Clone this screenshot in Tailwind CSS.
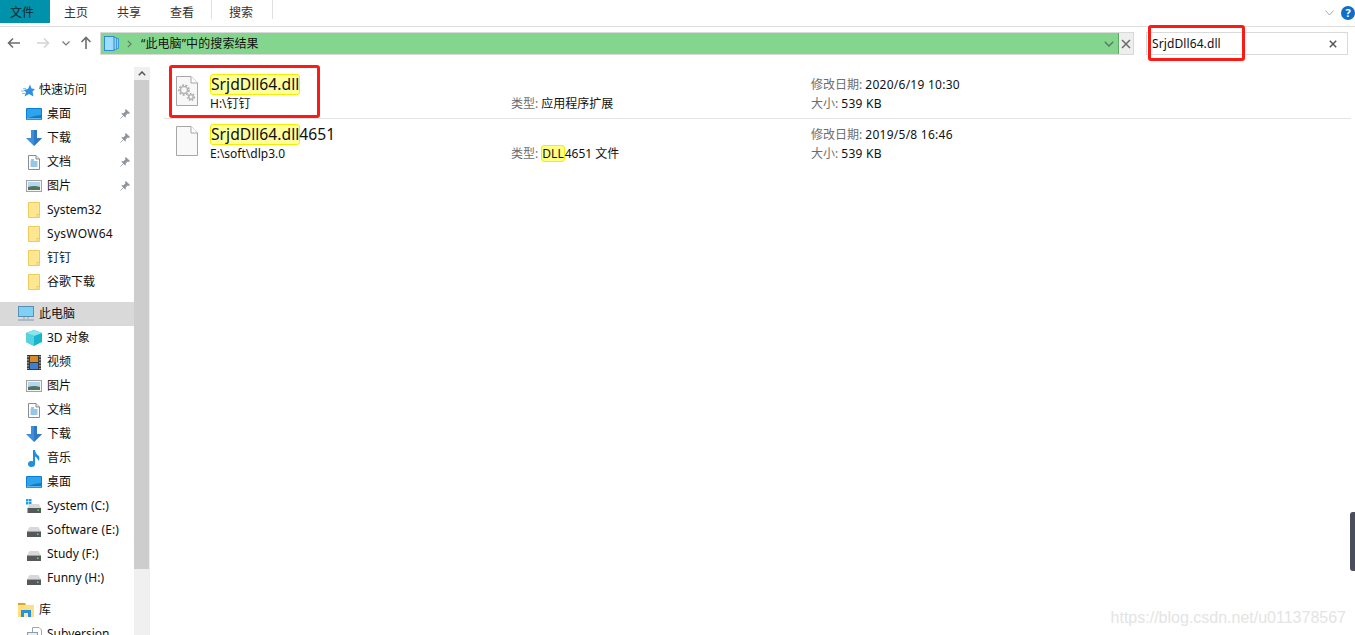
<!DOCTYPE html>
<html lang="zh-CN">
<head>
    <meta charset="UTF-8">
    <title>SrjdDll64.dll - 搜索结果</title>
    <script src="https://cdn.jsdelivr.net/npm/@tailwindcss/browser@4"></script>
</head>
<body class="bg-white overflow-hidden">
    <svg class="hidden">
        <symbol id="desktop" viewBox="0 0 16 12"><rect x="0" y="0" width="16" height="12" rx="1" fill="#0a7fd0"/><path d="M1 10.5 L1 1 H15 V7 Q8 7 1 10.5Z" fill="#2ea4ee"/><rect x="1" y="10.5" width="14" height="0.7" fill="#bfe3fa"/></symbol>
        <symbol id="down" viewBox="0 0 16 16"><path d="M5 0 H11 V8 H16 L8 16 L0 8 H5Z" fill="#3d8fdc"/><path d="M8 0 H11 V8 H16 L8 16Z" fill="#2f78c4"/></symbol>
        <symbol id="doc" viewBox="0 0 12 15"><path d="M.5.5 H8 L11.5 4 V14.5 H.5Z" fill="#fff" stroke="#8c8c8c"/><path d="M8 .5 V4 H11.5" fill="#e6e6e6" stroke="#8c8c8c"/><path d="M3 5 H6 M2.5 7 H9.5 M2.5 9 H9.5 M2.5 11 H9.5" stroke="#2b8fd6"/></symbol>
        <symbol id="pic" viewBox="0 0 16 12"><rect x=".5" y=".5" width="15" height="11" fill="#f4f4f4" stroke="#a3a3a3"/><rect x="2" y="2" width="12" height="8" fill="#b6d6ee"/><path d="M2 7 Q8 5 14 7 V10 H2Z" fill="#52735c"/></symbol>
        <symbol id="folder" viewBox="0 0 12 16"><path d="M.5.5 H11.5 V15.5 H.5Z" fill="#ffe792" stroke="#efcb5a"/><path d="M9 15.5 V12.5 H11.5" fill="none" stroke="#efcb5a"/></symbol>
        <symbol id="pin" viewBox="0 0 11 11"><path d="M6.5 .5 L10.5 4.5 L9.5 5 L8 4.8 L6 7 L5.8 9 L2 5.2 L4 5 L6.2 3 L6 1.500Z M3.500 7.500 L.5 10.500" fill="#8c9299" stroke="#8c9299" stroke-width=".8"/></symbol>
        <symbol id="drive" viewBox="0 0 14 10"><path d="M2.500 0 H11.500 L14 4.500 H0Z" fill="#d8d8d8"/><rect x="0" y="4.500" width="14" height="5.500" fill="#55585c"/><rect x="10" y="6.500" width="1.500" height="1.500" fill="#5be05b"/></symbol>
    </svg>

    <div class="h-[635px] w-[1355px] relative flex flex-col font-['Noto_Sans','Noto_Sans_CJK_SC',sans-serif] text-xs text-[#111]">

        <!-- ribbon tabs -->
        <div class="h-[27px] flex items-start border-b border-[#e0e0e0]">
            <div class="w-[50px] h-[23px] bg-[#0091ab] pl-[10px] pt-[5px] text-[#10252a]">文件</div>
            <div class="w-[53px] h-[23px] pl-[14px] pt-[5px] text-[#333]">主页</div>
            <div class="w-[53px] h-[23px] pl-[14px] pt-[5px] text-[#333]">共享</div>
            <div class="w-[55px] h-[23px] pl-[14px] pt-[5px] text-[#333]">查看</div>
            <div class="w-[62px] h-[19px] pl-[17px] pt-[5px] text-[#333] border-x border-[#e0e0e0]">搜索</div>
            <div class="ml-auto flex items-center gap-[7px] pr-0 h-[26px]">
                <svg class="w-[9px] h-[6px]" viewBox="0 0 9 6"><path d="M.5.5 L4.500 5 L8.500.5" fill="none" stroke="#a8a8a8"/></svg>
                <div class="w-[14px] h-[14px] rounded-full bg-[#0f6fc6] text-white text-[11px] font-bold flex items-center justify-center">?</div>
            </div>
        </div>

        <!-- address row -->
        <div class="h-[40px] flex items-start pt-[5px]">
            <div class="w-[100px] h-[22px] flex items-center pl-[7px]">
                <svg class="w-[14px] h-[12px]" viewBox="0 0 14 12"><path d="M13 6 H2 M6 1.500 L1.500 6 L6 10.500" fill="none" stroke="#6d6d6d" stroke-width="1.600"/></svg>
                <svg class="w-[14px] h-[12px] ml-[15px]" viewBox="0 0 14 12"><path d="M1 6 H12 M8 1.500 L12.500 6 L8 10.500" fill="none" stroke="#d4d4d4" stroke-width="1.600"/></svg>
                <svg class="w-[8px] h-[5px] ml-[12px]" viewBox="0 0 8 5"><path d="M.5.5 L4 4 L7.500.5" fill="none" stroke="#777" stroke-width="1.200"/></svg>
                <svg class="w-[12px] h-[14px] ml-[10px]" viewBox="0 0 12 14"><path d="M6 13 V2 M1.500 6 L6 1.500 L10.500 6" fill="none" stroke="#6d6d6d" stroke-width="1.600"/></svg>
            </div>
            <div class="w-[1019px] h-[23px] flex items-center bg-[#84d68f] border border-[#d9d9d9] border-r-0">
                <svg class="ml-[3px] w-[15px] h-[15px]" viewBox="0 0 15 15"><path d="M11 2.500 H14.500 V12.500 H11" fill="#8fd2f5" stroke="#3f9bd8"/><path d="M9 1.500 H12.500 V13.500 H9" fill="#8fd2f5" stroke="#3f9bd8"/><rect x=".5" y=".5" width="9.500" height="14" fill="#9fdcfb" stroke="#2f8bd0"/></svg>
                <svg class="ml-[8px] w-[5px] h-[8px]" viewBox="0 0 5 8"><path d="M.8.8 L4 4 L.8 7.200" fill="none" stroke="#5e7a62" stroke-width="1.200"/></svg>
                <span class="ml-[9px] text-[#111] tracking-[0.1px]">“此电脑”中的搜索结果</span>
                <svg class="ml-auto mr-[4px] w-[10px] h-[6px]" viewBox="0 0 10 6"><path d="M.8.8 L5 5 L9.200.8" fill="none" stroke="#5e7a62" stroke-width="1.500"/></svg>
                <div class="w-px h-full bg-[#5fa86a]"></div>
            </div>
            <div class="w-[15px] h-[23px] flex items-center justify-center bg-[#eeeeee] border border-[#d9d9d9] border-l-0">
                <svg class="w-[10px] h-[10px]" viewBox="0 0 10 10"><path d="M1 1 L9 9 M9 1 L1 9" stroke="#6d6d6d" stroke-width="1.600"/></svg>
            </div>
            <div class="ml-[12px] w-[202px] h-[23px] flex items-center border border-[#d9d9d9] pl-[5px] pr-[10px] justify-between">
                <span class="text-[#111] tracking-[0.1px]">SrjdDll64.dll</span>
                <svg class="w-[8px] h-[8px]" viewBox="0 0 8 8"><path d="M.8.8 L7.200 7.200 M7.200.8 L.8 7.200" stroke="#555" stroke-width="1.500"/></svg>
            </div>
        </div>

        <div class="flex-1 flex min-h-0">
            <!-- nav pane -->
            <nav class="w-[134px] pt-[11px] overflow-hidden">
                <div class="h-[24px] flex items-center pl-[21px]">
                    <svg class="w-[14px] h-[13px]" viewBox="0 0 14 13"><path d="M9 .5 L10.500 4.500 L14 5 L11.500 7.500 L12.500 12.500 L8 10 L3.500 12.500 L5 8 L2.500 6 L7 5Z" fill="#2f8fe0"/><path d="M0 7 H3 M1 9.500 H4 M2 4.500 H5" stroke="#8cc4f0"/></svg>
                    <span class="ml-[4px]">快速访问</span>
                </div>
                <div class="h-[24px] flex items-center pl-[26px]"><svg class="w-[16px] h-[12px]"><use href="#desktop"/></svg><span class="ml-[5px]">桌面</span><svg class="ml-auto mr-[4px] w-[10px] h-[10px]"><use href="#pin"/></svg></div>
                <div class="h-[24px] flex items-center pl-[26px]"><svg class="w-[16px] h-[16px]"><use href="#down"/></svg><span class="ml-[5px]">下载</span><svg class="ml-auto mr-[4px] w-[10px] h-[10px]"><use href="#pin"/></svg></div>
                <div class="h-[24px] flex items-center pl-[28px]"><svg class="w-[12px] h-[15px]"><use href="#doc"/></svg><span class="ml-[7px]">文档</span><svg class="ml-auto mr-[4px] w-[10px] h-[10px]"><use href="#pin"/></svg></div>
                <div class="h-[24px] flex items-center pl-[26px]"><svg class="w-[16px] h-[12px]"><use href="#pic"/></svg><span class="ml-[5px]">图片</span><svg class="ml-auto mr-[4px] w-[10px] h-[10px]"><use href="#pin"/></svg></div>
                <div class="h-[24px] flex items-center pl-[28px]"><svg class="w-[12px] h-[16px]"><use href="#folder"/></svg><span class="ml-[7px]">System32</span></div>
                <div class="h-[24px] flex items-center pl-[28px]"><svg class="w-[12px] h-[16px]"><use href="#folder"/></svg><span class="ml-[7px] tracking-[0.3px]">SysWOW64</span></div>
                <div class="h-[24px] flex items-center pl-[28px]"><svg class="w-[12px] h-[16px]"><use href="#folder"/></svg><span class="ml-[7px]">钉钉</span></div>
                <div class="h-[24px] flex items-center pl-[28px]"><svg class="w-[12px] h-[16px]"><use href="#folder"/></svg><span class="ml-[7px]">谷歌下载</span></div>
                <div class="h-[8px]"></div>
                <div class="h-[24px] flex items-center pl-[18px] bg-[#d9d9d9]">
                    <svg class="w-[16px] h-[16px]" viewBox="0 0 16 16"><rect x=".5" y=".5" width="15" height="10" fill="#7fd0f5" stroke="#5a8fb5"/><path d="M6 11 V13 M10 11 V13" stroke="#8aa6ba"/><rect x="0" y="13.500" width="16" height="1" fill="#7b9cb4"/></svg>
                    <span class="ml-[5px]">此电脑</span>
                </div>
                <div class="h-[24px] flex items-center pl-[26px]"><svg class="w-[16px] h-[16px]" viewBox="0 0 16 16"><path d="M8 0 L16 3 V12 L8 16 L0 12 V3Z" fill="#19b5cc"/><path d="M8 0 L16 3 L8 6 L0 3Z" fill="#8ae6ee"/><path d="M0 3 L8 6 V16 L0 12Z" fill="#56d2e0"/></svg><span class="ml-[5px]">3D 对象</span></div>
                <div class="h-[24px] flex items-center pl-[27px]"><svg class="w-[14px] h-[15px]" viewBox="0 0 14 15"><rect width="14" height="15" fill="#3a3a3a"/><rect x="3" y="1" width="8" height="6" fill="#d68a2e"/><rect x="3" y="8" width="8" height="6" fill="#3f7fd0"/><path d="M1 1 V14 M13 1 V14" stroke="#ddd" stroke-dasharray="1.500 1.500"/></svg><span class="ml-[6px]">视频</span></div>
                <div class="h-[24px] flex items-center pl-[26px]"><svg class="w-[16px] h-[12px]"><use href="#pic"/></svg><span class="ml-[5px]">图片</span></div>
                <div class="h-[24px] flex items-center pl-[28px]"><svg class="w-[12px] h-[15px]"><use href="#doc"/></svg><span class="ml-[7px]">文档</span></div>
                <div class="h-[24px] flex items-center pl-[26px]"><svg class="w-[16px] h-[16px]"><use href="#down"/></svg><span class="ml-[5px]">下载</span></div>
                <div class="h-[24px] flex items-center pl-[28px]"><svg class="w-[12px] h-[17px]" viewBox="0 0 12 17"><ellipse cx="3.500" cy="14" rx="3.500" ry="3" fill="#1e8fe0"/><path d="M5 14 V0 H7 Q7.500 4 11 6 Q12 9 10.500 11 Q9 7 7 6.500 V14Z" fill="#1e8fe0"/></svg><span class="ml-[7px]">音乐</span></div>
                <div class="h-[24px] flex items-center pl-[26px]"><svg class="w-[16px] h-[12px]"><use href="#desktop"/></svg><span class="ml-[5px]">桌面</span></div>
                <div class="h-[24px] flex items-center pl-[26px]"><svg class="w-[16px] h-[14px]" viewBox="0 0 16 14"><rect x="0" y="0" width="2.500" height="2.500" fill="#19a0e8"/><rect x="3" y="0" width="2.500" height="2.500" fill="#19a0e8"/><rect x="0" y="3" width="2.500" height="2.500" fill="#19a0e8"/><rect x="3" y="3" width="2.500" height="2.500" fill="#19a0e8"/><path d="M3.500 5 H13 L15 9 H1.500Z" fill="#d8d8d8"/><rect x="1.500" y="9" width="13.500" height="5" fill="#55585c"/><rect x="11.500" y="10.500" width="1.500" height="1.500" fill="#5be05b"/></svg><span class="ml-[5px]">System (C:)</span></div>
                <div class="h-[24px] flex items-center pl-[27px]"><svg class="w-[14px] h-[10px] mt-[3px]"><use href="#drive"/></svg><span class="ml-[6px] tracking-[0.15px]">Software (E:)</span></div>
                <div class="h-[24px] flex items-center pl-[27px]"><svg class="w-[14px] h-[10px] mt-[3px]"><use href="#drive"/></svg><span class="ml-[6px]">Study (F:)</span></div>
                <div class="h-[24px] flex items-center pl-[27px]"><svg class="w-[14px] h-[10px] mt-[3px]"><use href="#drive"/></svg><span class="ml-[6px]">Funny (H:)</span></div>
                <div class="h-[8px]"></div>
                <div class="h-[24px] flex items-center pl-[18px]"><svg class="w-[16px] h-[14px]" viewBox="0 0 16 14"><path d="M0 0 H7 L8 2 H16 V14 H0Z" fill="#ffdf7e"/><path d="M0 0 H7 L8 2 H0Z" fill="#d9a72f"/><rect x="3" y="7" width="10" height="7" fill="#2b8fe0"/><rect x="6" y="10" width="4" height="4" fill="#ffe9a8"/></svg><span class="ml-[5px]">库</span></div>
                <div class="h-[24px] flex items-center pl-[27px]"><svg class="w-[15px] h-[15px]" viewBox="0 0 15 15"><path d="M5.500.5 H12 L14.500 3 V14 H5.500Z" fill="#fff" stroke="#9aa8b5"/><rect x=".5" y="5.500" width="10" height="6" fill="#e8eef3" stroke="#8d9cab"/></svg><span class="ml-[5px]">Subversion</span></div>
            </nav>

            <!-- nav scrollbar -->
            <div class="w-[15px] bg-[#f0f0f0] flex flex-col items-center">
                <div class="h-[11px] flex items-center mt-[1px]">
                    <svg class="w-[8px] h-[5px]" viewBox="0 0 8 5"><path d="M.8 4.200 L4 1 L7.200 4.200" fill="none" stroke="#555" stroke-width="1.500"/></svg>
                </div>
                <div class="w-full h-[489px] mt-[1px] bg-[#cdcdcd]"></div>
            </div>
            <div class="w-px bg-[#eeeeee]"></div>

            <!-- results -->
            <main class="flex-1 pl-[14px] pr-[4px] pt-px">
                <section class="h-[51px] border-b border-[#e3e3e3] flex">
                    <div class="w-[46px] pl-[12px] pt-[8px]">
                        <svg class="w-[22px] h-[30px]" viewBox="0 0 22 30"><path d="M.5.5 H15 L21.500 7 V29.500 H.5Z" fill="#f7f7f7" stroke="#a6a6a6"/><path d="M15 .5 V7 H21.500" fill="#fff" stroke="#a6a6a6"/><circle cx="8" cy="14" r="3.500" fill="none" stroke="#b4b4b4" stroke-width="1.500"/><circle cx="8" cy="14" r="5" fill="none" stroke="#a8a8a8" stroke-width="1.500" stroke-dasharray="2 1.500"/><circle cx="15" cy="21" r="2.200" fill="none" stroke="#b4b4b4" stroke-width="1.500"/><circle cx="15" cy="21" r="3.500" fill="none" stroke="#a8a8a8" stroke-width="1.200" stroke-dasharray="1.500 1.500"/></svg>
                    </div>
                    <div class="w-[301px] pt-[5px]">
                        <div class="h-[22px] flex items-center"><span class="h-[21px] leading-[19px] rounded-[3px] text-[15.7px] bg-[#ffff9c] border border-[#f0f000]">SrjdDll64.dll</span></div>
                        <div class="h-[18px] pt-px">H:\钉钉</div>
                    </div>
                    <div class="w-[300px] pt-[28px]"><span class="text-[#6d6d6d]">类型:</span> 应用程序扩展</div>
                    <div class="pt-[9px]">
                        <div class="h-[19px]"><span class="text-[#6d6d6d]">修改日期:</span> <span class="tracking-[0.25px]">2020/6/19 10:30</span></div>
                        <div class="h-[19px]"><span class="text-[#6d6d6d]">大小:</span> <span class="tracking-[0.25px]">539 KB</span></div>
                    </div>
                </section>
                <section class="h-[50px] flex">
                    <div class="w-[46px] pl-[12px] pt-[7px]">
                        <svg class="w-[22px] h-[30px]" viewBox="0 0 22 30"><path d="M.5.5 H15 L21.500 7 V29.500 H.5Z" fill="#f9f9f9" stroke="#a6a6a6"/><path d="M15 .5 V7 H21.500" fill="#fff" stroke="#a6a6a6"/></svg>
                    </div>
                    <div class="w-[301px] pt-[4px]">
                        <div class="h-[22px] flex items-center text-[15.7px]"><span class="h-[21px] leading-[19px] rounded-[3px] bg-[#ffff9c] border border-[#f0f000]">SrjdDll64.dll</span><span class="ml-[-1px]">4651</span></div>
                        <div class="h-[18px] pt-[1px]">E:\soft\dlp3.0</div>
                    </div>
                    <div class="w-[300px] pt-[26px]"><span class="text-[#6d6d6d]">类型:</span> <span class="inline-block h-[17px] leading-[15px] rounded-[3px] bg-[#ffff80] border border-[#f0f000]">DLL</span>4651 文件</div>
                    <div class="pt-[8px]">
                        <div class="h-[19px]"><span class="text-[#6d6d6d]">修改日期:</span> <span class="tracking-[0.25px]">2019/5/8 16:46</span></div>
                        <div class="h-[19px]"><span class="text-[#6d6d6d]">大小:</span> <span class="tracking-[0.25px]">539 KB</span></div>
                    </div>
                </section>
            </main>
        </div>

        <!-- annotations on top of the screenshot -->
        <div class="absolute left-[169px] top-[65px] w-[151px] h-[53px] border-[3px] border-[#fb1a14] rounded-[3px]"></div>
        <div class="absolute left-[1148px] top-[25px] w-[97px] h-[36px] border-[3px] border-[#fb1a14] rounded-[3px]"></div>
        <div class="absolute left-[1350px] top-[512px] w-[5px] h-[59px] bg-[#4a4e5c] rounded-l-[3px]"></div>
        <div class="absolute right-[9px] top-[606px] text-base text-[#e4e4e4] font-['Liberation_Sans',sans-serif]">https://blog.csdn.net/u011378567</div>
    </div>
</body>
</html>
